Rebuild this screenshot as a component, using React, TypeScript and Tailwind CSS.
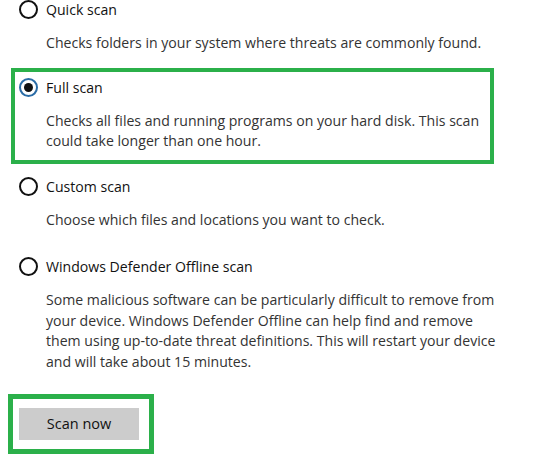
const options = [
  {
    id: "quick",
    title: "Quick scan",
    lines: ["Checks folders in your system where threats are commonly found."],
    gap: "mb-[3px]",
  },
  {
    id: "full",
    title: "Full scan",
    lines: [
      "Checks all files and running programs on your hard disk. This scan",
      "could take longer than one hour.",
    ],
    gap: "mb-[3px]",
  },
  {
    id: "custom",
    title: "Custom scan",
    lines: ["Choose which files and locations you want to check."],
    gap: "mb-[5px]",
  },
  {
    id: "offline",
    title: "Windows Defender Offline scan",
    lines: [
      "Some malicious software can be particularly difficult to remove from",
      "your device. Windows Defender Offline can help find and remove",
      "them using up-to-date threat definitions. This will restart your device",
      "and will take about 15 minutes.",
    ],
    gap: "mb-[0px]",
  },
];

function Radio({ checked }: { checked: boolean }) {
  return checked ? (
    <span className="flex h-[19px] w-[19px] shrink-0 items-center justify-center rounded-full border-2 border-[#2a6ca6]">
      <span className="h-[9px] w-[9px] rounded-full bg-[#111]" />
    </span>
  ) : (
    <span className="h-[19px] w-[19px] shrink-0 rounded-full border-2 border-[#111]" />
  );
}

export default function App() {
  const selected = "full";

  return (
    <div
      className="h-[458px] w-[544px] overflow-hidden bg-white text-[14.1px]"
      style={{ fontFamily: '"Segoe UI", "Open Sans", "Noto Sans", sans-serif' }}
    >
      <div className="mt-[-10px] flex flex-col">
        {options.map((o) => (
          <div
            key={o.id}
            className={
              "ml-[11px] w-[483px] border-4 px-[4px] pt-[5px] pb-[8px] " +
              (o.id === selected ? "border-[#2bb04a] " : "border-transparent ") +
              o.gap
            }
          >
            <div className="flex h-[20px] items-center gap-[8px] pt-[1px]">
              <Radio checked={o.id === selected} />
              <span className="whitespace-nowrap text-[#111]">{o.title}</span>
            </div>
            <div className="mt-[13.5px] pl-[27px] leading-[20.7px] text-[#333]">
              {o.lines.map((l) => (
                <div key={l} className="whitespace-nowrap">
                  {l}
                </div>
              ))}
            </div>
          </div>
        ))}
      </div>

      <div className="mt-[9.5px] ml-[8px] w-[146px] border-[5px] border-[#2bb04a] pt-[9px] pr-[10px] pb-[9px] pl-[6px]">
        <button className="flex h-[32px] w-[120px] items-center justify-center bg-[#cccccc] text-[14.5px] text-[#111]">
          Scan now
        </button>
      </div>
    </div>
  );
}
